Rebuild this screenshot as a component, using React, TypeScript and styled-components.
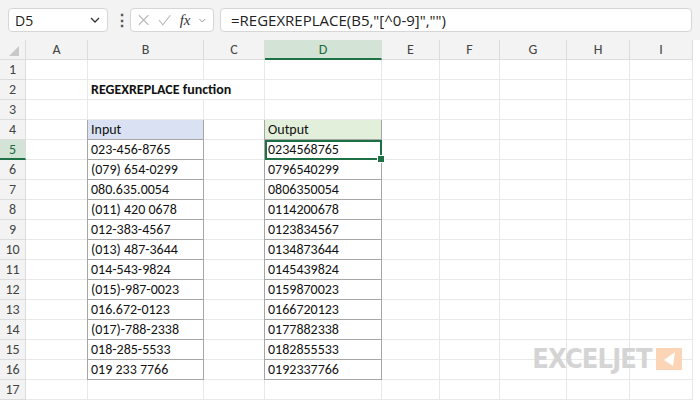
import React from 'react'
import styled, { createGlobalStyle } from 'styled-components'

const Global = createGlobalStyle`
body { margin: 0; background: #fff; font-family: Calibri, Carlito, "Liberation Sans", Arial, sans-serif; }
`

const cols = [
  { name: 'A', w: 62 },
  { name: 'B', w: 116 },
  { name: 'C', w: 61 },
  { name: 'D', w: 117 },
  { name: 'E', w: 58 },
  { name: 'F', w: 60 },
  { name: 'G', w: 67 },
  { name: 'H', w: 63 },
  { name: 'I', w: 63 },
]
const template = `26px ${cols.map((c) => c.w + 'px').join(' ')}`

const inputs = [
  '023-456-8765', '(079) 654-0299', '080.635.0054', '(011) 420 0678', '012-383-4567',
  '(013) 487-3644', '014-543-9824', '(015)-987-0023', '016.672-0123', '(017)-788-2338',
  '018-285-5533', '019 233 7766',
]
const outputs = inputs.map((s) => s.replace(/[^0-9]/g, ''))

const Page = styled.div`
  width: 700px;
  height: 400px;
  overflow: hidden;
  position: relative;
`
const Toolbar = styled.div`
  height: 40px;
  background: #f3f3f3;
  display: flex;
  align-items: center;
  padding: 0 8px;
  gap: 6px;
  font-family: "Segoe UI", "Open Sans", "Liberation Sans", sans-serif;
`
const NameBox = styled.div`
  width: 100px;
  height: 24px;
  background: #fff;
  border: 1px solid #d6d6d6;
  border-radius: 4px;
  display: flex;
  align-items: center;
  justify-content: space-between;
  padding: 0 6px;
  box-sizing: border-box;
  font-size: 14px;
  color: #222;
`
const Dots = styled.div`
  color: #555;
  font-size: 16px;
  font-weight: bold;
  width: 10px;
  text-align: center;
`
const IconBox = styled.div`
  width: 84px;
  height: 24px;
  background: #fff;
  border: 1px solid #d6d6d6;
  border-radius: 4px;
  box-sizing: border-box;
  display: flex;
  align-items: center;
  gap: 8px;
  padding: 0 6px;
  color: #bbb;
`
const Fx = styled.span`
  font-family: "Liberation Serif", serif;
  font-style: italic;
  font-size: 15px;
  color: #333;
`
const Formula = styled.div`
  flex: 1;
  height: 24px;
  background: #fff;
  border: 1px solid #d6d6d6;
  border-radius: 4px;
  box-sizing: border-box;
  display: flex;
  align-items: center;
  padding: 0 10px;
  font-size: 15px;
  color: #222;
`
const Sheet = styled.div`
  display: grid;
  grid-template-columns: ${template};
  grid-auto-rows: 20px;
`
const Head = styled.div<{ $active?: boolean }>`
  background: ${(p) => (p.$active ? '#d3e3d5' : '#f3f3f3')};
  color: ${(p) => (p.$active ? '#1e6b3c' : '#444')};
  border-right: 1px solid #dcdcdc;
  border-bottom: ${(p) => (p.$active ? '2px solid #1e7145' : '1px solid #dcdcdc')};
  box-sizing: border-box;
  display: flex;
  align-items: center;
  justify-content: center;
  font-size: 14px;
`
const Cell = styled.div<{ $table?: 'in' | 'out'; $head?: boolean; $bold?: boolean; $sel?: boolean }>`
  position: relative;
  box-sizing: border-box;
  font-size: 14px;
  color: #111;
  padding: 0 3px;
  display: flex;
  align-items: center;
  white-space: nowrap;
  overflow: visible;
  font-weight: ${(p) => (p.$bold ? 'bold' : 'normal')};
  ${(p) => (p.$bold ? 'z-index: 2; border-right-color: transparent !important;' : '')}
  background: ${(p) => (p.$head ? (p.$table === 'in' ? '#d9e1f2' : '#e2efda') : p.$bold ? 'transparent' : '#fff')};
  border-right: 1px solid ${(p) => (p.$table ? '#a6a6a6' : '#e8e8e8')};
  border-bottom: 1px solid ${(p) => (p.$table ? '#a6a6a6' : '#e8e8e8')};
  ${(p) => (p.$table ? 'box-shadow: -1px 0 0 #a6a6a6;' : '')}
  ${(p) => (p.$sel ? 'outline: 2px solid #1e7145; outline-offset: -2px; z-index: 1;' : '')}
`
const Handle = styled.span`
  position: absolute;
  right: -4px;
  bottom: -4px;
  width: 6px;
  height: 6px;
  background: #1e7145;
  border: 1px solid #fff;
`
const Logo = styled.div`
  position: absolute;
  right: 18px;
  bottom: 26px;
  display: flex;
  align-items: center;
  gap: 4px;
`
const LogoText = styled.span`
  font-family: "DejaVu Sans", "Liberation Sans", sans-serif;
  font-weight: bold;
  font-size: 27px;
  letter-spacing: -1px;
  color: #d4d4d4;
  display: inline-block;
  transform: scaleX(0.9);
  transform-origin: right center;
  margin-left: -20px;
`

export default function App() {
  const rows: React.ReactNode[] = []
  for (let r = 1; r <= 17; r++) {
    rows.push(<Head key={`h${r}`} $active={r === 5}>{r}</Head>)
    cols.forEach((c) => {
      const k = `${c.name}${r}`
      if (r === 2 && c.name === 'B') return rows.push(<Cell key={k} $bold>REGEXREPLACE function</Cell>)
      if (r >= 4 && r <= 16 && (c.name === 'B' || c.name === 'D')) {
        const t = c.name === 'B' ? 'in' : 'out'
        const text = r === 4 ? (t === 'in' ? 'Input' : 'Output') : t === 'in' ? inputs[r - 5] : outputs[r - 5]
        const sel = c.name === 'D' && r === 5
        return rows.push(
          <Cell key={k} $table={t} $head={r === 4} $sel={sel}>
            {text}
            {sel && <Handle />}
          </Cell>
        )
      }
      rows.push(<Cell key={k} />)
    })
  }
  return (
    <Page>
      <Global />
      <Toolbar>
        <NameBox>
          D5
          <svg width="12" height="12" viewBox="0 0 12 12"><path d="M2 4l4 4 4-4" stroke="#333" strokeWidth="1.3" fill="none" /></svg>
        </NameBox>
        <Dots>⋮</Dots>
        <IconBox>
          <svg width="14" height="14" viewBox="0 0 14 14"><path d="M2 2l10 10M12 2L2 12" stroke="#bbb" strokeWidth="1.2" /></svg>
          <svg width="14" height="14" viewBox="0 0 14 14"><path d="M1 7l4 5 8-10" stroke="#bbb" strokeWidth="1.2" fill="none" /></svg>
          <Fx>fx</Fx>
          <svg width="9" height="9" viewBox="0 0 12 12"><path d="M2 4l4 4 4-4" stroke="#888" strokeWidth="1.3" fill="none" /></svg>
        </IconBox>
        <Formula>=REGEXREPLACE(B5,"[^0-9]","")</Formula>
      </Toolbar>
      <Sheet>
        <Head>
          <svg width="14" height="14" viewBox="0 0 14 14"><path d="M13 3v10H3z" fill="#c8c8c8" /></svg>
        </Head>
        {cols.map((c) => (
          <Head key={c.name} $active={c.name === 'D'}>{c.name}</Head>
        ))}
        {rows}
      </Sheet>
      <Logo>
        <LogoText>EXCELJET</LogoText>
        <svg width="26" height="22" viewBox="0 0 26 22">
          <rect width="26" height="22" fill="#fbd5b6" />
          <path d="M19 4L8 12l9 6z" fill="#fff" />
        </svg>
      </Logo>
    </Page>
  )
}
